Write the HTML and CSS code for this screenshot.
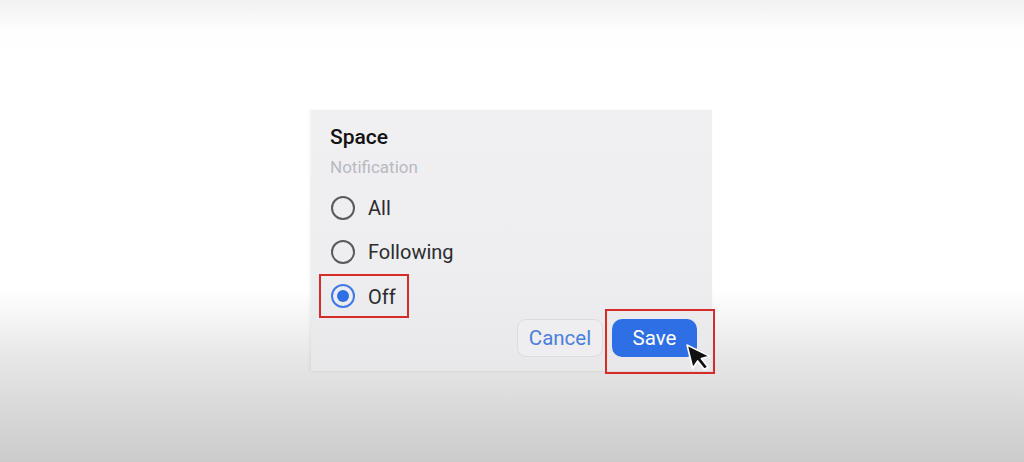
FILE: index.html
```html
<!DOCTYPE html>
<html>
<head>
<meta charset="utf-8">
<link rel="stylesheet" href="styles.css">
</head>
<body>
<div class="stage">
  <div class="card">
    <div class="title">Space</div>
    <div class="subtitle">Notification</div>
    <div class="options">
      <div class="option"><span class="radio"></span><span class="label">All</span></div>
      <div class="option"><span class="radio"></span><span class="label">Following</span></div>
      <div class="option selected"><span class="radio"><span class="dot"></span></span><span class="label">Off</span><span class="highlight hl-off"></span></div>
    </div>
    <div class="actions">
      <button class="btn btn-cancel">Cancel</button>
      <div class="save-wrap">
        <button class="btn btn-save">Save</button>
        <span class="highlight hl-save"></span>
        <svg class="cursor" width="28" height="32" viewBox="0 0 28 32">
          <g transform="rotate(-14 2 2)">
            <path d="M2 2 L2 26 L8.5 20 L13 30 L17 28.3 L12.6 18.6 L21.5 18.6 Z" fill="#111" stroke="#fff" stroke-width="1.6" stroke-linejoin="round"/>
          </g>
        </svg>
      </div>
    </div>
  </div>
</div>
</body>
</html>
```
FILE: styles.css
```css
html, body {
  margin: 0;
  padding: 0;
}
body {
  width: 1024px;
  height: 462px;
  overflow: hidden;
  background: linear-gradient(to bottom, #f1f1f1 0px, #fdfdfd 28px, #ffffff 60px, #ffffff 290px, #e6e6e6 360px, #cbcbcb 462px);
  font-family: Roboto, "Noto Sans", sans-serif;
}
.stage {
  padding-top: 110px;
  padding-left: 311px;
}
.card {
  position: relative;
  width: 401px;
  height: 261px;
  box-sizing: border-box;
  padding: 15px 15px 0 19px;
  background: linear-gradient(to bottom, #f0f0f3 0%, #eeeef1 60%, #e8e8ea 100%);
  box-shadow: -2px 0 3px rgba(0,0,0,0.04), 0 1px 2px rgba(0,0,0,0.03);
  display: flex;
  flex-direction: column;
}
.title {
  font-size: 21px;
  font-weight: 500;
  color: #121212;
  line-height: 24px;
}
.subtitle {
  margin-top: 8px;
  font-size: 17px;
  color: #b9b9be;
  line-height: 20px;
}
.options {
  margin-top: 9px;
  display: flex;
  flex-direction: column;
}
.option {
  position: relative;
  height: 44px;
  display: flex;
  align-items: center;
  gap: 13px;
}
.radio {
  width: 20px;
  height: 20px;
  margin-left: 1px;
  border: 2px solid #5a5a5e;
  border-radius: 50%;
  display: flex;
  align-items: center;
  justify-content: center;
  flex: none;
}
.selected .radio {
  border-color: #3f7ae8;
}
.dot {
  width: 12px;
  height: 12px;
  border-radius: 50%;
  background: #2f6fe6;
}
.label {
  font-size: 20px;
  color: #2b2b2e;
}
.selected .label {
  margin-top: 2px;
}
.highlight {
  position: absolute;
  border: 2px solid #d62b2b;
  box-sizing: border-box;
  pointer-events: none;
}
.hl-off {
  left: -11px;
  top: 0;
  width: 90px;
  height: 44px;
}
.actions {
  margin-top: 1px;
  display: flex;
  justify-content: flex-end;
  gap: 9px;
}
.btn {
  font-family: Roboto, "Noto Sans", sans-serif;
  font-size: 20.5px;
  height: 38px;
  border-radius: 9px;
  padding: 0;
  cursor: pointer;
}
.btn-cancel {
  width: 86px;
  background: #eeeef0;
  border: 1px solid #dcdce0;
  color: #4a7fdc;
}
.save-wrap {
  position: relative;
}
.btn-save {
  width: 85px;
  background: #2f6fe6;
  border: none;
  color: #ffffff;
  border-radius: 10px;
}
.hl-save {
  left: -7px;
  top: -10px;
  width: 110px;
  height: 65px;
}
.cursor {
  position: absolute;
  left: 73px;
  top: 24px;
}
```
